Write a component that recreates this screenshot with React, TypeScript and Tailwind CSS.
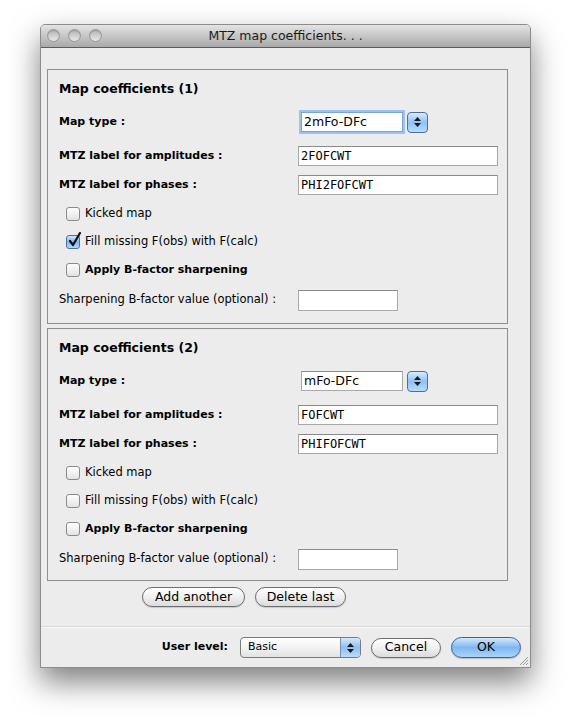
import React from 'react'

const SANS = "[font-family:'DejaVu_Sans',Verdana,sans-serif]"

function Stepper() {
  return (
    <div className="flex h-[21px] w-[21px] flex-col items-center justify-center gap-[2px] rounded-[4px] border border-[#4a6fa5] bg-gradient-to-b from-[#d9ebfd] via-[#8fc2f5] to-[#b8dcfb]">
      <svg width="7" height="4" viewBox="0 0 7 4"><path d="M3.5 0 L7 4 L0 4 Z" fill="#1a1a1a" /></svg>
      <svg width="7" height="4" viewBox="0 0 7 4"><path d="M0 0 L7 0 L3.5 4 Z" fill="#1a1a1a" /></svg>
    </div>
  )
}

function Checkbox({ checked }: { checked?: boolean }) {
  if (checked) {
    return (
      <div className="relative h-[14px] w-[14px] rounded-[3px] border border-[#4f6f9e] bg-gradient-to-b from-[#cfe6fc] via-[#7db7f0] to-[#b4d8fa]">
        <svg className="absolute left-[1px] top-[-4px]" width="14" height="16" viewBox="0 0 14 16">
          <path d="M2 9 L5 13 L12 1" fill="none" stroke="#111" strokeWidth="2.2" strokeLinecap="round" strokeLinejoin="round" />
        </svg>
      </div>
    )
  }
  return <div className="h-[14px] w-[14px] rounded-[3px] border border-[#8a8a8a] bg-gradient-to-b from-[#ffffff] to-[#e3e3e3]" />
}

function TextField({ value, width }: { value: string; width: string }) {
  return (
    <div className={`${width} flex h-[20px] items-center border border-[#a8a8a8] border-t-[#8a8a8a] bg-white pl-[2px] font-['DejaVu_Sans_Mono',monospace] text-[12px] text-black`}>
      {value}
    </div>
  )
}

function FieldRow({ label, children, mt }: { label: string; children: React.ReactNode; mt: string }) {
  return (
    <div className={`${mt} flex h-[22px] items-center`}>
      <div className="w-[239px] text-[11px] font-bold">{label}</div>
      {children}
    </div>
  )
}

function CheckRow({ label, checked, bold, mt }: { label: string; checked?: boolean; bold?: boolean; mt: string }) {
  return (
    <div className={`${mt} flex h-[22px] items-center gap-[5px] pl-[7px]`}>
      <Checkbox checked={checked} />
      <span className={bold ? 'text-[11px] font-bold' : 'text-[11.5px]'}>{label}</span>
    </div>
  )
}

function MapBox({ n, mapType, focused, amp, phases, pb }: { n: number; mapType: string; focused?: boolean; amp: string; phases: string; pb: string }) {
  return (
    <div className={`flex w-[461px] flex-col border border-[#8e8e8e] pl-[11px] pt-[8px] ${pb}`}>
      <div className="flex h-[22px] items-center text-[12.5px] font-bold">Map coefficients ({n})</div>
      <div className="mt-[11px] flex h-[22px] items-center">
        <div className="w-[239px] text-[11px] font-bold">Map type :</div>
        <div
          className={`ml-[3px] flex h-[20px] w-[102px] items-center bg-white pl-[2px] text-[12.5px] ${
            focused ? 'border border-[#7aa3d6] shadow-[0_0_0_2px_#9cc3ee]' : 'border border-[#a8a8a8] border-t-[#8a8a8a]'
          }`}
        >
          {mapType}
        </div>
        <div className="ml-[4px]">
          <Stepper />
        </div>
      </div>
      <FieldRow label="MTZ label for amplitudes :" mt="mt-[12px]">
        <TextField value={amp} width="w-[200px]" />
      </FieldRow>
      <FieldRow label="MTZ label for phases :" mt="mt-[7px]">
        <TextField value={phases} width="w-[200px]" />
      </FieldRow>
      <CheckRow label="Kicked map" mt="mt-[7px]" />
      <CheckRow label="Fill missing F(obs) with F(calc)" checked={n === 1} mt="mt-[6px]" />
      <CheckRow label="Apply B-factor sharpening" bold mt="mt-[6px]" />
      <div className="mt-[8px] flex h-[22px] items-center">
        <div className="w-[239px] text-[11.5px]">Sharpening B-factor value (optional) :</div>
        <div className="h-[21px] w-[100px] border border-[#a8a8a8] border-t-[#8a8a8a] bg-white" />
      </div>
    </div>
  )
}

function AquaButton({ children, width }: { children: React.ReactNode; width: string }) {
  return (
    <div
      className={`${width} flex h-[20px] items-center justify-center rounded-full border border-[#6e6e6e] bg-gradient-to-b from-[#ffffff] via-[#f0f0f0] to-[#dcdcdc] text-[12.5px] shadow-[0_1px_1px_rgba(0,0,0,0.15)]`}
    >
      {children}
    </div>
  )
}

export default function App() {
  return (
    <div className={`min-h-screen bg-white pl-[40px] pt-[24px] text-black ${SANS}`}>
      <div className="relative flex h-[644px] w-[491px] flex-col overflow-hidden rounded-t-[5px] border border-[#8c8c8c] bg-[#ececec] shadow-[0_14px_30px_rgba(0,0,0,0.5)]">
        {/* title bar */}
        <div className="relative flex h-[23px] items-center justify-center border-b border-[#5c5c5c] bg-gradient-to-b from-[#e4e4e4] to-[#a9a9a9]">
          <div className="absolute left-[6px] top-[4px] flex gap-[8px]">
            {[0, 1, 2].map((i) => (
              <div key={i} className="h-[13px] w-[13px] rounded-full border border-[#979797] bg-gradient-to-b from-[#b4b4b4] to-[#e8e8e8] shadow-[inset_0_1px_1px_rgba(0,0,0,0.15)]" />
            ))}
          </div>
          <span className="text-[12.5px] text-[#1a1a1a]">MTZ map coefficients. . .</span>
        </div>

        {/* content */}
        <div className="flex flex-1 flex-col pl-[6px] pt-[21px]">
          <MapBox n={1} mapType="2mFo-DFc" focused amp="2FOFCWT" phases="PHI2FOFCWT" pb="pb-[12px]" />
          <div className="mt-[4px]">
            <MapBox n={2} mapType="mFo-DFc" amp="FOFCWT" phases="PHIFOFCWT" pb="pb-[10px]" />
          </div>
          <div className="mt-[6px] flex gap-[10px] pl-[95px]">
            <AquaButton width="w-[103px]">Add another</AquaButton>
            <AquaButton width="w-[91px]">Delete last</AquaButton>
          </div>
        </div>

        {/* bottom bar */}
        <div className="flex h-[41px] items-center justify-end border-t border-[#d6d6d6] pr-[9px] pt-[1px] shadow-[inset_0_1px_0_#f8f8f8]">
          <span className="mr-[12px] text-[11px] font-bold">User level:</span>
          <div className="flex h-[21px] w-[121px] items-center rounded-[4px] border border-[#7a7a7a] bg-gradient-to-b from-[#ffffff] via-[#f3f3f3] to-[#e2e2e2]">
            <span className="flex-1 pl-[7px] text-[11px]">Basic</span>
            <div className="flex h-full w-[20px] flex-col items-center justify-center gap-[2px] rounded-r-[3px] border-l border-[#7a8fb0] bg-gradient-to-b from-[#d5e9fc] via-[#8cc0f3] to-[#b9dcfb]">
              <svg width="7" height="4" viewBox="0 0 7 4"><path d="M3.5 0 L7 4 L0 4 Z" fill="#1a1a1a" /></svg>
              <svg width="7" height="4" viewBox="0 0 7 4"><path d="M0 0 L7 0 L3.5 4 Z" fill="#1a1a1a" /></svg>
            </div>
          </div>
          <div className="ml-[10px]">
            <AquaButton width="w-[70px]">Cancel</AquaButton>
          </div>
          <div className="ml-[10px] flex h-[21px] w-[70px] items-center justify-center rounded-full border border-[#3d5f9c] bg-gradient-to-b from-[#d3e8fc] via-[#7fb8ef] to-[#a9d4fa] text-[12.5px] shadow-[0_1px_1px_rgba(0,0,0,0.2)]">
            OK
          </div>
        </div>

        {/* resize grip */}
        <svg className="absolute bottom-[1px] right-[1px]" width="11" height="11" viewBox="0 0 11 11">
          <path d="M10 2 L2 10 M10 5 L5 10 M10 8 L8 10" stroke="#9a9a9a" strokeWidth="1" />
        </svg>
      </div>
    </div>
  )
}
